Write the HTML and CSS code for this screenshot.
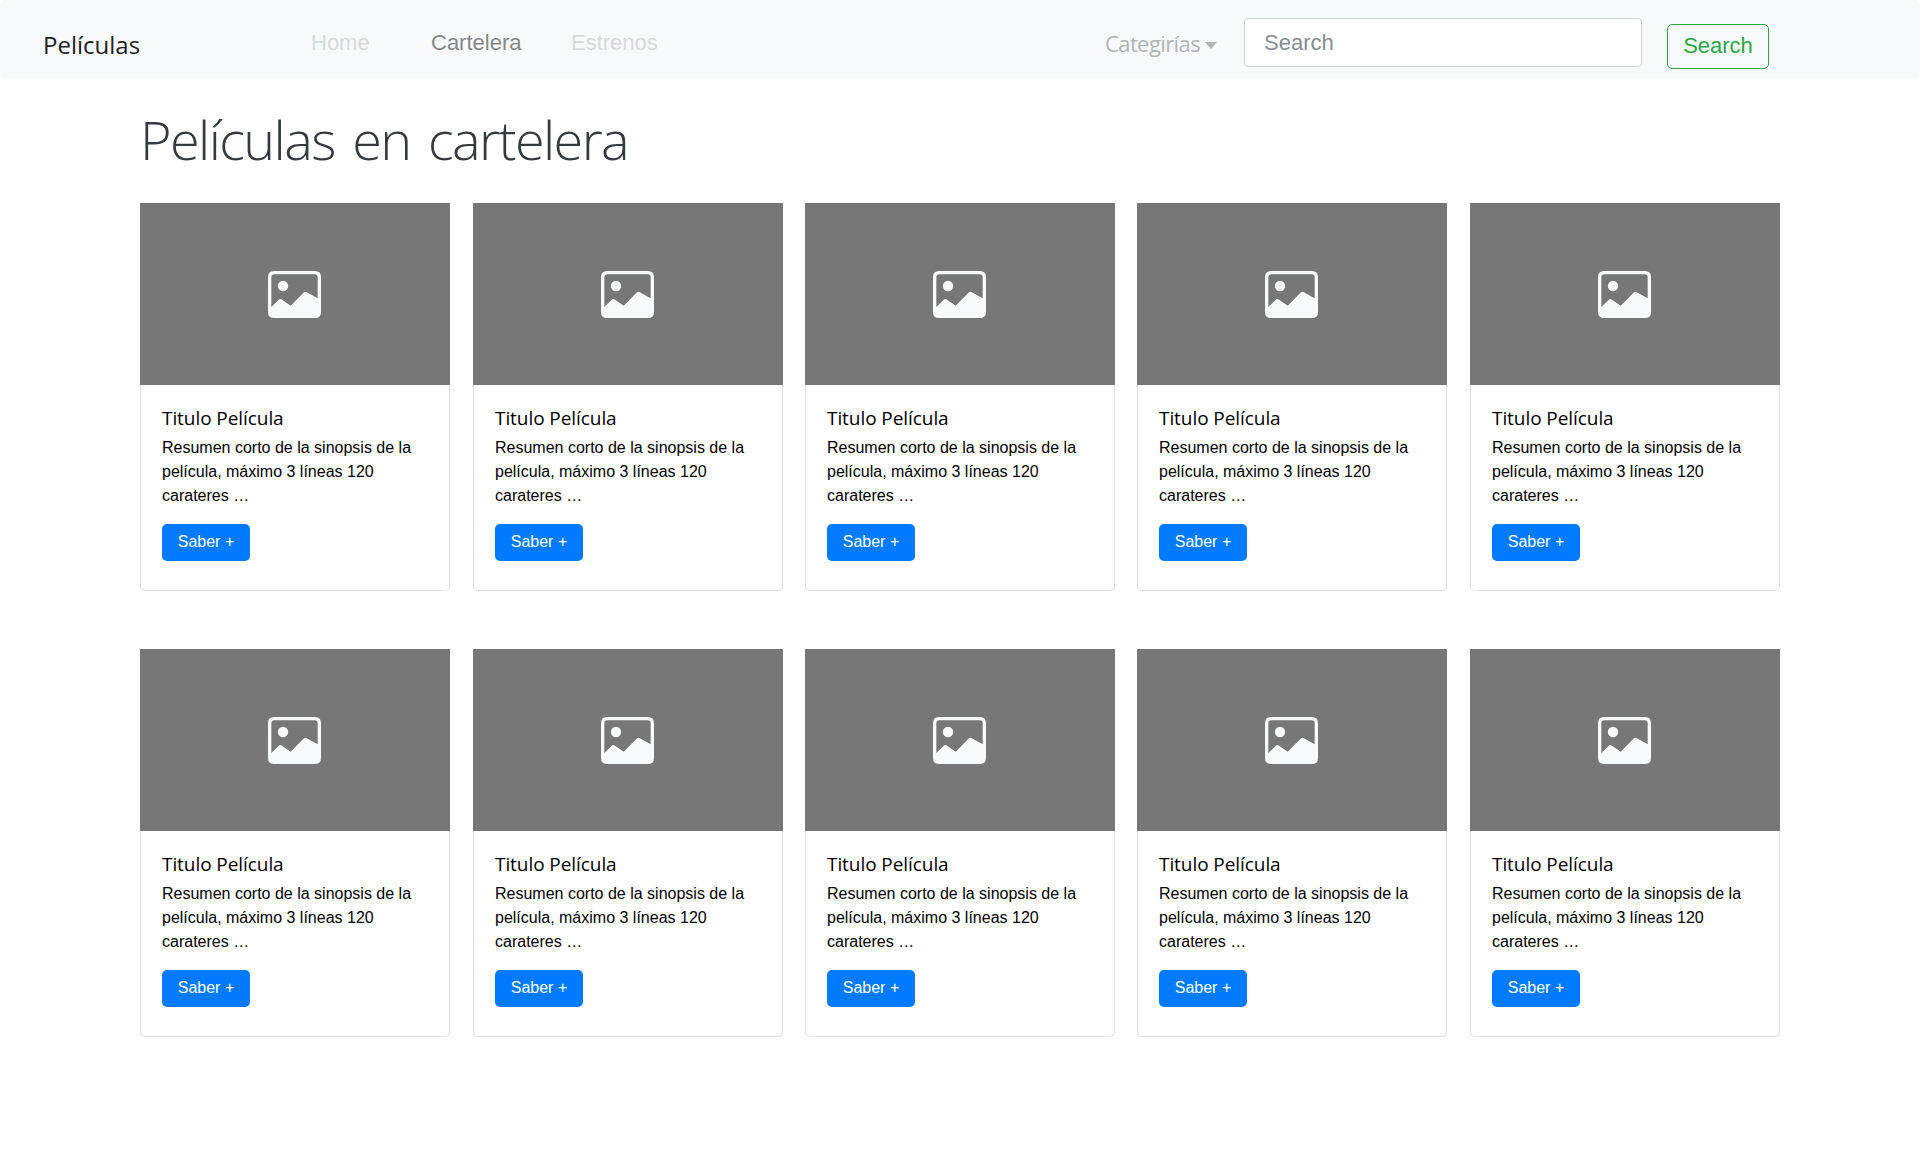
FILE: index.html
```html
<!DOCTYPE html>
<html lang="es">
<head>
<meta charset="utf-8">
<title>Películas</title>
<link rel="stylesheet" href="styles.css">
</head>
<body>
<svg class="defs" width="0" height="0" aria-hidden="true">
  <symbol id="picture" viewBox="39 33 159 141">
    <path fill-rule="evenodd" d="M57 33H180Q198 33 198 51V156Q198 174 180 174H57Q39 174 39 156V51Q39 33 57 33ZM58 43Q49 43 49 52V141L73 118Q76 116 79 118L107 137L147 97Q150 94 154 96L188 115V52Q188 43 179 43Z"/>
    <circle cx="84" cy="78" r="15.5"/>
  </symbol>
</svg>
<nav class="navbar">
  <a class="brand"><span>Películas</span></a>
  <div class="links">
    <a class="link home">Home</a>
    <a class="link active">Cartelera</a>
    <a class="link">Estrenos</a>
  </div>
  <a class="dropdown"><span>Categirías</span><i class="caret"></i></a>
  <form class="search">
    <input class="field" type="text" placeholder="Search">
    <button class="submit" type="button">Search</button>
  </form>
</nav>
<main class="page">
  <h1 class="heading"><span>Películas en cartelera</span></h1>
  <div class="grid">
    <article class="card"><div class="thumb"><svg class="icon"><use href="#picture"/></svg></div><div class="body"><h2 class="title"><span>Titulo Película</span></h2><p class="text">Resumen corto de la sinopsis de la<br>película, máximo 3 líneas 120<br>carateres …</p><a class="btn">Saber +</a></div></article>
    <article class="card"><div class="thumb"><svg class="icon"><use href="#picture"/></svg></div><div class="body"><h2 class="title"><span>Titulo Película</span></h2><p class="text">Resumen corto de la sinopsis de la<br>película, máximo 3 líneas 120<br>carateres …</p><a class="btn">Saber +</a></div></article>
    <article class="card"><div class="thumb"><svg class="icon"><use href="#picture"/></svg></div><div class="body"><h2 class="title"><span>Titulo Película</span></h2><p class="text">Resumen corto de la sinopsis de la<br>película, máximo 3 líneas 120<br>carateres …</p><a class="btn">Saber +</a></div></article>
    <article class="card"><div class="thumb"><svg class="icon"><use href="#picture"/></svg></div><div class="body"><h2 class="title"><span>Titulo Película</span></h2><p class="text">Resumen corto de la sinopsis de la<br>película, máximo 3 líneas 120<br>carateres …</p><a class="btn">Saber +</a></div></article>
    <article class="card"><div class="thumb"><svg class="icon"><use href="#picture"/></svg></div><div class="body"><h2 class="title"><span>Titulo Película</span></h2><p class="text">Resumen corto de la sinopsis de la<br>película, máximo 3 líneas 120<br>carateres …</p><a class="btn">Saber +</a></div></article>
    <article class="card"><div class="thumb"><svg class="icon"><use href="#picture"/></svg></div><div class="body"><h2 class="title"><span>Titulo Película</span></h2><p class="text">Resumen corto de la sinopsis de la<br>película, máximo 3 líneas 120<br>carateres …</p><a class="btn">Saber +</a></div></article>
    <article class="card"><div class="thumb"><svg class="icon"><use href="#picture"/></svg></div><div class="body"><h2 class="title"><span>Titulo Película</span></h2><p class="text">Resumen corto de la sinopsis de la<br>película, máximo 3 líneas 120<br>carateres …</p><a class="btn">Saber +</a></div></article>
    <article class="card"><div class="thumb"><svg class="icon"><use href="#picture"/></svg></div><div class="body"><h2 class="title"><span>Titulo Película</span></h2><p class="text">Resumen corto de la sinopsis de la<br>película, máximo 3 líneas 120<br>carateres …</p><a class="btn">Saber +</a></div></article>
    <article class="card"><div class="thumb"><svg class="icon"><use href="#picture"/></svg></div><div class="body"><h2 class="title"><span>Titulo Película</span></h2><p class="text">Resumen corto de la sinopsis de la<br>película, máximo 3 líneas 120<br>carateres …</p><a class="btn">Saber +</a></div></article>
    <article class="card"><div class="thumb"><svg class="icon"><use href="#picture"/></svg></div><div class="body"><h2 class="title"><span>Titulo Película</span></h2><p class="text">Resumen corto de la sinopsis de la<br>película, máximo 3 líneas 120<br>carateres …</p><a class="btn">Saber +</a></div></article>
  </div>
</main>
</body>
</html>
```
FILE: styles.css
```css
* { box-sizing: border-box; }
body { margin: 0; background: #fff; color: #000; font-family: "Liberation Sans", Arial, sans-serif; }
.defs { display: block; }
.navbar { display: flex; align-items: flex-start; height: 78px; background: #f8f9fb; border-radius: 4px; }
.brand { width: 311px; padding: 29px 0 0 43px; font: 24px/32px "Open Sans", sans-serif; color: #1d1f21; }
.links { display: flex; width: 794px; padding-top: 30px; font-size: 22px; line-height: 26px; color: #d8dadc; }
.home { width: 120px; }
.active { width: 140px; color: #86888a; }
.dropdown { display: flex; align-items: center; gap: 5px; width: 139px; padding-top: 28px; font: 22px/30px "Open Sans", sans-serif; color: #b0b5b8; letter-spacing: -0.6px; }
.caret { border: 6px solid transparent; border-top: 7px solid #b0b5b8; border-bottom: 0; margin-top: 4px; }
.search { display: flex; align-items: flex-start; gap: 25px; padding-top: 18px; }
.field { width: 398px; height: 49px; padding: 1px 19px 0; border: 1px solid #ced4da; border-radius: 4px; background: #fff; font: 22px "Liberation Sans", Arial, sans-serif; }
.field::placeholder { color: #868e96; opacity: 1; }
.submit { width: 102px; height: 45px; margin-top: 6px; padding: 0 0 1px; border: 1px solid #28a745; border-radius: 5px; background: transparent; color: #28a745; font: 22px "Liberation Sans", Arial, sans-serif; }
.page { width: 1640px; margin: 0 auto; }
.heading { height: 125px; margin: 0; padding-top: 24px; font: 300 54px/74px "Open Sans", sans-serif; color: #343a40; letter-spacing: -1.6px; word-spacing: 5px; }
.grid { display: grid; grid-template-columns: 333px 332px 332px 333px 310px; row-gap: 58px; }
.card { width: 310px; height: 388px; border: 1px solid #dfdfdf; border-top: 0; border-radius: 0 0 5px 5px; }
.thumb { display: flex; align-items: center; justify-content: center; height: 182px; margin: 0 -1px; padding-right: 1px; background: #777; }
.icon { width: 53px; height: 47px; fill: #f8f9fb; }
.body { padding: 21px 21px 0; }
.title { margin: 0; font: 400 19px/24px "Open Sans", sans-serif; letter-spacing: -0.07px; }
.text { margin: 6px 0 16px; font-size: 16px; line-height: 24px; white-space: nowrap; }
.btn { display: flex; justify-content: center; width: 88px; height: 37px; border-radius: 5px; background: #007bff; color: #fff; font-size: 16px; line-height: 35px; }
```
